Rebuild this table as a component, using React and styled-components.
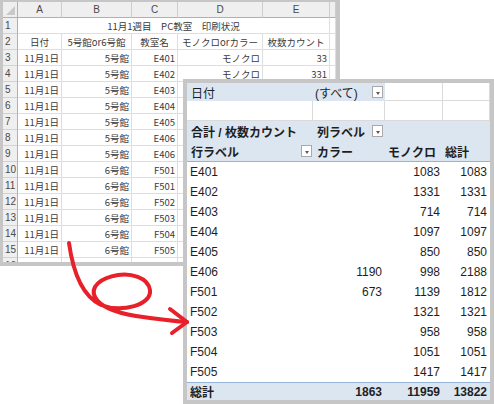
import React from 'react';
import styled, { createGlobalStyle, css } from 'styled-components';

const GlobalStyle = createGlobalStyle`
  body {
    margin: 0;
    background: #fff;
    font-family: "Liberation Sans", "Noto Sans CJK JP", sans-serif;
  }
`;

const Canvas = styled.div`
  position: relative;
  width: 494px;
  height: 404px;
  overflow: hidden;
  background: #fff;
`;

// ---- background worksheet ----
const Sheet = styled.div`
  width: 340px;
  height: 266px;
  box-sizing: border-box;
  border-style: solid;
  border-color: #c6c6c6;
  border-width: 2px 4px 4px 3px;
  overflow: hidden;
  background: #fff;
`;

const SheetGrid = styled.div`
  display: grid;
  grid-template-columns: 15px 44px 70px 46px 85px 67px 6px;
  grid-auto-rows: 16px;
  font-family: "Noto Sans CJK JP", sans-serif;
  font-size: 9.5px;
  color: #3a3a3a;
`;

const Cell = styled.div`
  box-sizing: border-box;
  display: flex;
  align-items: center;
  justify-content: ${p => (p.$align === 'center' ? 'center' : p.$align === 'left' ? 'flex-start' : 'flex-end')};
  padding: 0 2px;
  white-space: nowrap;
  overflow: hidden;
  border-right: 1px solid #dedede;
  border-bottom: 1px solid #dedede;
  ${p => p.$span && css`grid-column: span ${p.$span};`}
`;

const ColHead = styled(Cell)`
  background: #efefef;
  color: #4a4a4a;
  font-family: "Liberation Sans", sans-serif;
  font-size: 10px;
  border-right-color: #cdcdcd;
  border-bottom-color: #b0b0b0;
`;

const RowNum = styled(Cell)`
  background: #efefef;
  color: #4a4a4a;
  font-family: "Liberation Sans", sans-serif;
  font-size: 10px;
  padding-left: 2px;
  border-right-color: #b0b0b0;
  border-bottom-color: #d2d2d2;
`;

const Corner = styled(Cell)`
  position: relative;
  background: #efefef;
  border-right-color: #b0b0b0;
  border-bottom-color: #b0b0b0;
  &::after {
    content: '';
    position: absolute;
    right: 2px;
    bottom: 2px;
    border-style: solid;
    border-width: 0 0 9px 9px;
    border-color: transparent transparent #c9c9c9 transparent;
  }
`;

// ---- pivot table ----
const Pivot = styled.div`
  position: absolute;
  left: 183px;
  top: 79px;
  width: 311px;
  height: 325px;
  box-sizing: border-box;
  border: 4px solid #c6c6c6;
  background: #fff;
  display: grid;
  grid-template-columns: 126px 72px 58px 47px;
  grid-template-rows: 18px 20px 20px 21px repeat(11, 20px) 18px;
  font-family: "Liberation Sans", "Noto Sans CJK JP", sans-serif;
  font-size: 12px;
  color: #1e1e1e;
`;

const PCell = styled.div`
  box-sizing: border-box;
  display: flex;
  align-items: center;
  white-space: nowrap;
  justify-content: ${p => (p.$num ? 'flex-end' : 'flex-start')};
  padding: ${p => (p.$num ? '0 3px 0 0' : '0 2px 0 4px')};
  font-weight: ${p => (p.$bold ? 700 : 400)};
  background: ${p => (p.$blue ? '#dce6f1' : '#fff')};
  ${p => p.$grid && css`
    border-right: 1px solid #dadada;
    border-bottom: 1px solid #dadada;
  `}
  ${p => p.$headEnd && css`border-bottom: 1px solid #95b3d7;`}
  ${p => p.$total && css`border-top: 1px solid #95b3d7;`}
`;

const Drop = styled.span`
  position: relative;
  margin-left: auto;
  width: 11px;
  height: 12px;
  box-sizing: border-box;
  border: 1px solid #a9a9a9;
  background: #fff;
  &::after {
    content: '';
    position: absolute;
    left: 3px;
    top: 5px;
    border-style: solid;
    border-width: 3px 2px 0 2px;
    border-color: #5a5a5a transparent transparent transparent;
  }
`;

const Arrow = styled.svg`
  position: absolute;
  left: 0;
  top: 0;
  pointer-events: none;
`;

// rows 5+ have their D/E values hidden under the pivot screenshot
const sheetRows = [
  ['11月1日', '5号館', 'E401', 'モノクロ', '33'],
  ['11月1日', '5号館', 'E402', 'モノクロ', '331'],
  ['11月1日', '5号館', 'E403', '', ''],
  ['11月1日', '5号館', 'E404', '', ''],
  ['11月1日', '5号館', 'E405', '', ''],
  ['11月1日', '5号館', 'E406', '', ''],
  ['11月1日', '5号館', 'E406', '', ''],
  ['11月1日', '6号館', 'F501', '', ''],
  ['11月1日', '6号館', 'F501', '', ''],
  ['11月1日', '6号館', 'F502', '', ''],
  ['11月1日', '6号館', 'F503', '', ''],
  ['11月1日', '6号館', 'F504', '', ''],
  ['11月1日', '6号館', 'F505', '', ''],
  ['11月1日', '6号館', 'F501', '', ''],
];

const pivotRows = [
  ['E401', '', '1083', '1083'],
  ['E402', '', '1331', '1331'],
  ['E403', '', '714', '714'],
  ['E404', '', '1097', '1097'],
  ['E405', '', '850', '850'],
  ['E406', '1190', '998', '2188'],
  ['F501', '673', '1139', '1812'],
  ['F502', '', '1321', '1321'],
  ['F503', '', '958', '958'],
  ['F504', '', '1051', '1051'],
  ['F505', '', '1417', '1417'],
];

const Worksheet = () => (
  <Sheet>
    <SheetGrid>
      <Corner />
      {['A', 'B', 'C', 'D', 'E', ''].map((c, i) => (
        <ColHead key={i} $align="center">{c}</ColHead>
      ))}

      <RowNum $align="left">1</RowNum>
      <Cell $span={5} $align="center">11月1週目　PC教室　印刷状況</Cell>
      <Cell />

      <RowNum $align="left">2</RowNum>
      <Cell $align="center">日付</Cell>
      <Cell $align="center">5号館or6号館</Cell>
      <Cell $align="center">教室名</Cell>
      <Cell $align="center">モノクロorカラー</Cell>
      <Cell $align="center">枚数カウント</Cell>
      <Cell />

      {sheetRows.map((r, i) => (
        <React.Fragment key={i}>
          <RowNum $align="left">{i + 3}</RowNum>
          {r.map((v, j) => (
            <Cell key={j}>{v}</Cell>
          ))}
          <Cell />
        </React.Fragment>
      ))}
    </SheetGrid>
  </Sheet>
);

const PivotTable = () => (
  <Pivot>
    <PCell $blue>日付</PCell>
    <PCell $blue style={{ paddingLeft: 2 }}>(すべて)<Drop /></PCell>
    <PCell $grid />
    <PCell $grid />

    <PCell $grid />
    <PCell $grid />
    <PCell $grid />
    <PCell $grid />

    <PCell $blue $bold>合計 / 枚数カウント</PCell>
    <PCell $blue $bold>列ラベル<Drop /></PCell>
    <PCell $blue />
    <PCell $blue />

    <PCell $blue $bold $headEnd style={{ paddingRight: 1 }}>行ラベル<Drop /></PCell>
    <PCell $blue $bold $headEnd>カラー</PCell>
    <PCell $blue $bold $headEnd style={{ paddingLeft: 3 }}>モノクロ</PCell>
    <PCell $blue $bold $headEnd style={{ paddingLeft: 2 }}>総計</PCell>

    {pivotRows.map(r => (
      <React.Fragment key={r[0]}>
        <PCell style={{ paddingLeft: 3 }}>{r[0]}</PCell>
        <PCell $num>{r[1]}</PCell>
        <PCell $num>{r[2]}</PCell>
        <PCell $num>{r[3]}</PCell>
      </React.Fragment>
    ))}

    <PCell $blue $bold $total style={{ paddingLeft: 3 }}>総計</PCell>
    <PCell $blue $bold $total $num>1863</PCell>
    <PCell $blue $bold $total $num>11959</PCell>
    <PCell $blue $bold $total $num>13822</PCell>
  </Pivot>
);

export default function App() {
  return (
    <Canvas>
      <GlobalStyle />
      <Worksheet />
      <PivotTable />
      <Arrow width="494" height="404" viewBox="0 0 494 404">
        <g fill="none" stroke="#e8202a" strokeWidth="4" strokeLinecap="round" strokeLinejoin="round">
          <path d="M69,243 C73,272 82,296 101,305 C122,313 152,305 150,290 C148,277 130,273 118,275 C100,278 90,287 95,297 C100,307 118,313 136,316 C156,319 172,321 187,322" />
          <path d="M170,309 L187,322 L172,333" />
        </g>
      </Arrow>
    </Canvas>
  );
}
